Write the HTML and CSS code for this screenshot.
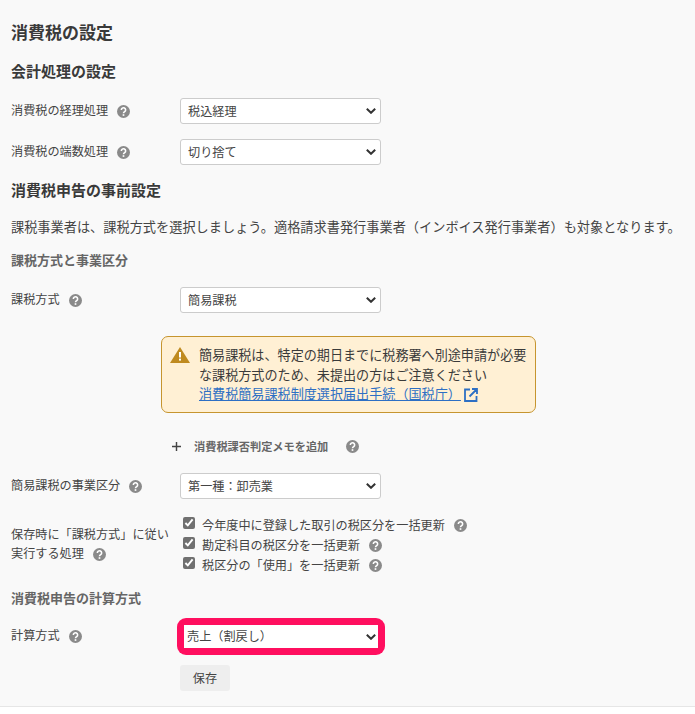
FILE: index.html
```html
<!DOCTYPE html>
<html lang="ja">
<head>
  <meta charset="UTF-8">
  <meta name="viewport" content="width=device-width, initial-scale=1.0">
  <title>消費税の設定</title>
  <link rel="stylesheet" href="styles.css">
</head>
<body>
  <svg class="icon-defs" width="0" height="0">
    <symbol id="help" viewBox="0 0 14 14">
      <circle cx="7" cy="7" r="7" fill="#8a8a8a"/>
      <path d="M4.7 5.4a2.3 2.3 0 1 1 3.6 1.8c-.9.6-1.3 1-1.3 1.8" fill="none" stroke="#fff" stroke-width="1.7"/>
      <rect x="6.1" y="9.9" width="1.8" height="1.8" fill="#fff"/>
    </symbol>
    <symbol id="chevron" viewBox="0 0 10 6">
      <path d="M.8.8 5 4.8 9.2.8" fill="none" stroke="#333" stroke-width="2"/>
    </symbol>
  </svg>

  <main class="panel">
    <h1>消費税の設定</h1>

    <h2 class="first">会計処理の設定</h2>
    <div class="row row-account">
      <label class="label">消費税の経理処理<svg class="help"><use href="#help"/></svg></label>
      <div class="select"><select><option>税込経理</option></select><svg class="chevron"><use href="#chevron"/></svg></div>
    </div>
    <div class="row row-round">
      <label class="label">消費税の端数処理<svg class="help"><use href="#help"/></svg></label>
      <div class="select"><select><option>切り捨て</option></select><svg class="chevron"><use href="#chevron"/></svg></div>
    </div>

    <h2 class="second">消費税申告の事前設定</h2>
    <p class="lead">課税事業者は、課税方式を選択しましょう。適格請求書発行事業者（インボイス発行事業者）も対象となります。</p>

    <h3>課税方式と事業区分</h3>
    <div class="row row-method">
      <label class="label">課税方式<svg class="help"><use href="#help"/></svg></label>
      <div class="select"><select><option>簡易課税</option></select><svg class="chevron"><use href="#chevron"/></svg></div>
    </div>

    <div class="alert">
      <svg class="alert-icon" viewBox="0 0 20 16">
        <path d="M10 0 20 16H0Z" fill="#bf8a1f"/>
        <rect x="9" y="5" width="2" height="5.5" fill="#fff"/>
        <rect x="9" y="11.6" width="2" height="2" fill="#fff"/>
      </svg>
      <div class="alert-body">
        簡易課税は、特定の期日までに税務署へ別途申請が必要な課税方式のため、未提出の方はご注意ください<br>
        <a href="#">消費税簡易課税制度選択届出手続（国税庁）</a><svg class="external" viewBox="0 0 14 14">
          <path d="M6 1.5H1v11.5h11.5V8M8 1h5v5M13 1 5.5 8.5" fill="none" stroke="#2d6fc4" stroke-width="1.8"/>
        </svg>
      </div>
    </div>

    <div class="memo">
      <svg class="plus" viewBox="0 0 10 10"><path d="M5 0v10M0 5h10" stroke="#444" stroke-width="1.6"/></svg>
      <span>消費税課否判定メモを追加</span>
      <svg class="help"><use href="#help"/></svg>
    </div>

    <div class="row row-type">
      <label class="label">簡易課税の事業区分<svg class="help"><use href="#help"/></svg></label>
      <div class="select"><select><option>第一種：卸売業</option></select><svg class="chevron"><use href="#chevron"/></svg></div>
    </div>

    <div class="row row-checks">
      <div class="label">保存時に「課税方式」に従い<br>実行する処理<svg class="help"><use href="#help"/></svg></div>
      <div class="checks">
        <label class="check"><input type="checkbox" checked>今年度中に登録した取引の税区分を一括更新<svg class="help"><use href="#help"/></svg></label>
        <label class="check"><input type="checkbox" checked>勘定科目の税区分を一括更新<svg class="help"><use href="#help"/></svg></label>
        <label class="check"><input type="checkbox" checked>税区分の「使用」を一括更新<svg class="help"><use href="#help"/></svg></label>
      </div>
    </div>

    <h3 class="calc">消費税申告の計算方式</h3>
    <div class="row row-calc">
      <label class="label">計算方式<svg class="help"><use href="#help"/></svg></label>
      <div class="select highlight"><select><option>売上（割戻し）</option></select><svg class="chevron"><use href="#chevron"/></svg></div>
    </div>

    <button class="save">保存</button>
  </main>
</body>
</html>
```

FILE: styles.css
```css
* {
  box-sizing: border-box;
}

html {
  background: #fff;
}

body {
  margin: 0;
  font-family: "Noto Sans CJK JP", "Noto Sans", sans-serif;
  font-size: 12.15px;
  color: #444;
}

.icon-defs {
  display: block;
  height: 0;
}

.panel {
  height: 707px;
  padding: 20px 11px 0;
  background: #f9f9f9;
  border-bottom: 1px solid #e6e6e6;
}

h1 {
  margin: 0;
  font-size: 17px;
  line-height: 24px;
  font-weight: 700;
  color: #3a3a3a;
}

h2 {
  margin: 0;
  font-size: 15px;
  line-height: 20px;
  font-weight: 700;
  color: #3a3a3a;
}

h2.first {
  margin-top: 17px;
}

h2.second {
  margin-top: 15px;
}

h3 {
  margin: 13px 0 0;
  font-size: 13px;
  line-height: 20px;
  font-weight: 700;
  color: #666;
}

.lead {
  margin: 17px 0 0;
  font-size: 13.2px;
  line-height: 20px;
  white-space: nowrap;
}

.row {
  display: flex;
  align-items: center;
}

.row-account {
  margin-top: 17px;
}

.row-round {
  margin-top: 15px;
}

.row-method {
  margin-top: 17px;
}

.row-type {
  margin-top: 17px;
}

.row-checks {
  margin-top: 16px;
}

.row-calc {
  margin-top: 10px;
}

.label {
  width: 169px;
  flex: none;
  line-height: 19px;
  margin-bottom: 4px;
}

.help {
  width: 13px;
  height: 13px;
  margin-left: 9px;
  vertical-align: -3px;
}

.select {
  position: relative;
  width: 201px;
  height: 26px;
}

.select select {
  display: block;
  width: 100%;
  height: 100%;
  padding: 0 20px 2px 7px;
  font: inherit;
  color: #444;
  background: #fff;
  border: 1px solid #ccc;
  border-radius: 3px;
  appearance: none;
}

.chevron {
  position: absolute;
  top: 10px;
  right: 5px;
  width: 10px;
  height: 6px;
  pointer-events: none;
}

.select.highlight {
  width: 208px;
  height: 37px;
  margin-left: -3px;
  padding: 7px;
  border-radius: 9px;
  background: #ff0f5f;
}

.highlight select {
  height: 23px;
  padding-left: 3px;
  border: 0;
  border-radius: 0;
}

.highlight .chevron {
  top: 16px;
  right: 9px;
}

.alert {
  display: flex;
  width: 375px;
  height: 77px;
  margin: 23px 0 0 150px;
  padding: 8px 8px 0;
  background: #fff0d4;
  border: 1px solid #c6952f;
  border-radius: 7px;
}

.alert-icon {
  width: 20px;
  height: 16px;
  margin: 2px 9px 0 0;
  flex: none;
}

.alert-body {
  width: 335px;
  font-size: 13.1px;
  line-height: 19.5px;
  color: #3a3a3a;
}

.alert-body a {
  color: #2d6fc4;
}

.external {
  width: 14px;
  height: 14px;
  margin-left: 3px;
  vertical-align: -3px;
}

.memo {
  display: flex;
  align-items: center;
  height: 20px;
  margin: 23px 0 0 161px;
  font-size: 11.2px;
  font-weight: 700;
  color: #666;
}

.plus {
  width: 9px;
  height: 9px;
  margin-right: 13px;
}

.memo .help {
  margin-left: 18px;
}

.checks {
  display: flex;
  flex-direction: column;
}

.check {
  display: flex;
  align-items: center;
  height: 20px;
  padding-bottom: 1px;
}

.check input {
  width: 12px;
  height: 12px;
  margin: 0 7px 4px 3px;
  accent-color: #707070;
}

.check .help {
  margin-top: 2px;
}

.calc {
  margin-top: 13px;
}

.save {
  display: block;
  width: 50px;
  height: 26px;
  margin: 10px 0 0 169px;
  padding: 0 0 2px;
  font: inherit;
  color: #444;
  background: #eee;
  border: 0;
  border-radius: 3px;
}
```
